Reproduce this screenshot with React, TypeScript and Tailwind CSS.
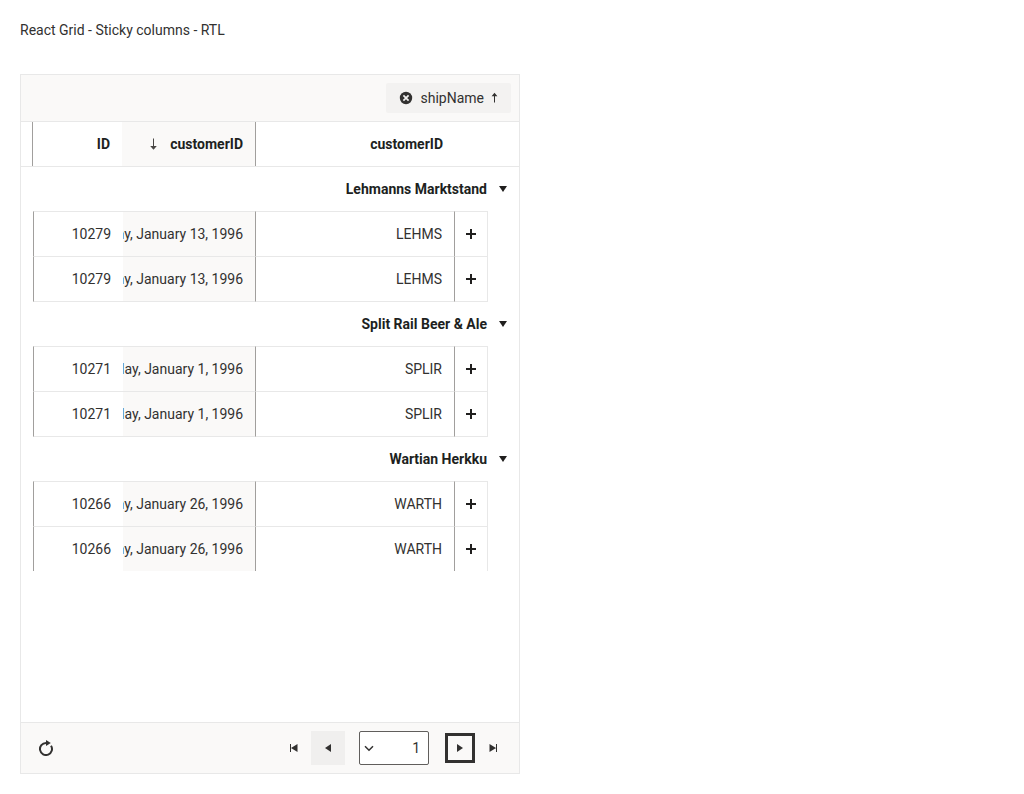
import { Fragment } from "react";
import type { ReactNode } from "react";

type Order = { id: number; date: string; customer: string };
type Group = { name: string; orders: Order[] };

const groups: Group[] = [
  {
    name: "Lehmanns Marktstand",
    orders: [
      { id: 10279, date: "Saturday, January 13, 1996", customer: "LEHMS" },
      { id: 10279, date: "Saturday, January 13, 1996", customer: "LEHMS" },
    ],
  },
  {
    name: "Split Rail Beer & Ale",
    orders: [
      { id: 10271, date: "Monday, January 1, 1996", customer: "SPLIR" },
      { id: 10271, date: "Monday, January 1, 1996", customer: "SPLIR" },
    ],
  },
  {
    name: "Wartian Herkku",
    orders: [
      { id: 10266, date: "Friday, January 26, 1996", customer: "WARTH" },
      { id: 10266, date: "Friday, January 26, 1996", customer: "WARTH" },
    ],
  },
];

function Icon({ children, className = "" }: { children: ReactNode; className?: string }) {
  return (
    <svg
      viewBox="0 0 16 16"
      aria-hidden="true"
      className={`size-4 shrink-0 ${className}`}
      fill="currentColor"
    >
      {children}
    </svg>
  );
}

function PagerButton({
  label,
  className = "",
  children,
}: {
  label: string;
  className?: string;
  children: ReactNode;
}) {
  return (
    <button
      type="button"
      aria-label={label}
      className={`flex size-[34px] items-center justify-center ${className}`}
    >
      <Icon>{children}</Icon>
    </button>
  );
}

function GroupPanel() {
  return (
    <div className="flex border-b border-[#e8e8e8] bg-[#faf9f8] p-2">
      <div className="flex h-[30px] items-center gap-1.5 rounded-xs bg-[#f3f2f1] ps-2 pe-3">
        <button
          type="button"
          className="flex items-center gap-[3px]"
          aria-label="shipName, sorted ascending"
        >
          <Icon>
            <path d="M7.5 2.800 10.400 6.200H8V12.500H7V6.200H4.600z" />
          </Icon>
          <span>shipName</span>
        </button>
        <button type="button" aria-label="Remove shipName grouping">
          <Icon>
            <circle cx="8" cy="8" r="6.2" />
            <path d="m5.4 5.4 5.2 5.2M10.6 5.4l-5.2 5.2" stroke="#f3f2f1" strokeWidth="1.7" />
          </Icon>
        </button>
      </div>
    </div>
  );
}

function HeaderTable() {
  return (
    <table className="w-full table-fixed border-separate border-spacing-0 border-b border-[#e8e8e8] text-[#201f1e]">
      <colgroup>
        <col className="w-16" />
        <col />
        <col className="w-[134px]" />
        <col className="w-[90px]" />
        <col className="w-[11px]" />
      </colgroup>
      <thead>
        <tr>
          <td />
          <th scope="col" className="px-3 py-3 text-start font-bold">
            customerID
          </th>
          <th
            scope="col"
            aria-sort="descending"
            className="border-r border-[#a19f9d] bg-[#faf9f8] px-3 py-3 text-start font-bold"
          >
            <span className="flex items-center gap-2">
              customerID
              <Icon className="text-[#484644]">
                <path d="M7 2.500h1v7.500h2.800L7.500 13.700 4.200 10H7z" />
              </Icon>
            </span>
          </th>
          <th scope="col" className="border-l border-[#a19f9d] px-3 py-3 text-start font-bold">
            ID
          </th>
          <td />
        </tr>
      </thead>
    </table>
  );
}

function OrderRow({ order, closed }: { order: Order; closed: boolean }) {
  const line = closed ? "border-y border-y-[#e8e8e8]" : "border-t border-t-[#e8e8e8]";
  return (
    <tr>
      <td />
      <td className={`border-r border-r-[#e8e8e8] ${line}`}>
        <button
          type="button"
          aria-label={`Expand order ${order.id}`}
          className="flex h-5 w-full items-center justify-center text-[#201f1e]"
        >
          <Icon>
            <path d="M7 3h2v4h4v2H9v4H7V9H3V7h4z" />
          </Icon>
        </button>
      </td>
      <td className={`border-r border-r-[#a19f9d] px-3 py-3 ${line}`}>{order.customer}</td>
      <td
        className={`overflow-hidden border-r border-r-[#a19f9d] bg-[#faf9f8] px-3 py-3 whitespace-nowrap ${line}`}
      >
        {order.date}
      </td>
      <td className={`border-l border-l-[#a19f9d] px-3 py-3 ${line}`}>{order.id}</td>
      <td />
    </tr>
  );
}

function BodyTable() {
  return (
    <table className="w-full table-fixed border-separate border-spacing-0">
      <colgroup>
        <col className="w-[31px]" />
        <col className="w-[33px]" />
        <col />
        <col className="w-[133px]" />
        <col className="w-[90px]" />
        <col className="w-3" />
      </colgroup>
      <tbody>
        {groups.map((group, index) => (
          <Fragment key={group.name}>
            <tr>
              <td colSpan={6} className="px-2 py-3 font-bold text-[#201f1e]">
                <div className="flex items-center gap-2">
                  <button type="button" aria-label={`Collapse ${group.name}`}>
                    <Icon>
                      <path d="M4 5h8l-4 6z" />
                    </Icon>
                  </button>
                  {group.name}
                </div>
              </td>
            </tr>
            {group.orders.map((order, row) => (
              <OrderRow
                key={row}
                order={order}
                closed={row === group.orders.length - 1 && index < groups.length - 1}
              />
            ))}
          </Fragment>
        ))}
      </tbody>
    </table>
  );
}

function Pager() {
  return (
    <div className="flex items-center justify-between border-t border-[#e8e8e8] bg-[#faf9f8] p-2">
      <div className="flex items-center">
        <PagerButton label="Go to the first page">
          <path d="M3.500 4v8l6.500-4zM10 4h1v8h-1z" />
        </PagerButton>
        <PagerButton
          label="Go to the previous page"
          className="outline-3 -outline-offset-5 outline-[#323130]"
        >
          <path d="M5 4v8l6-4z" />
        </PagerButton>
        <div className="relative mx-3.5">
          <select
            aria-label="Page"
            defaultValue="1"
            className="h-[34px] w-[70px] appearance-none rounded-xs border border-[#605e5c] bg-white pr-2 pl-6"
          >
            <option value="1">1</option>
          </select>
          <Icon className="pointer-events-none absolute top-[9px] left-0.5">
            <path d="m4 6.2 4 4 4-4" fill="none" stroke="currentColor" strokeWidth="1.5" />
          </Icon>
        </div>
        <PagerButton label="Go to the next page" className="bg-[#f0efee]">
          <path d="M11 4v8L5 8z" />
        </PagerButton>
        <PagerButton label="Go to the last page">
          <path d="M11.500 4v8L5 8zM4 4h1v8H4z" />
        </PagerButton>
      </div>
      <PagerButton label="Refresh">
        <path
          d="M8 3A6 6 0 1 0 13 5.700"
          fill="none"
          stroke="currentColor"
          strokeWidth="2"
        />
        <path d="M8 0v6l4.800-3z" />
      </PagerButton>
    </div>
  );
}

export default function App() {
  return (
    <main className="p-5 font-[Roboto,sans-serif] text-sm leading-5 text-[#323130]">
      <p className="mb-[34px]">React Grid - Sticky columns - RTL</p>
      <div dir="rtl" className="max-w-[500px] border border-[#e8e8e8] bg-white">
        <GroupPanel />
        <HeaderTable />
        <div className="min-h-[555px]">
          <BodyTable />
        </div>
        <Pager />
      </div>
    </main>
  );
}
